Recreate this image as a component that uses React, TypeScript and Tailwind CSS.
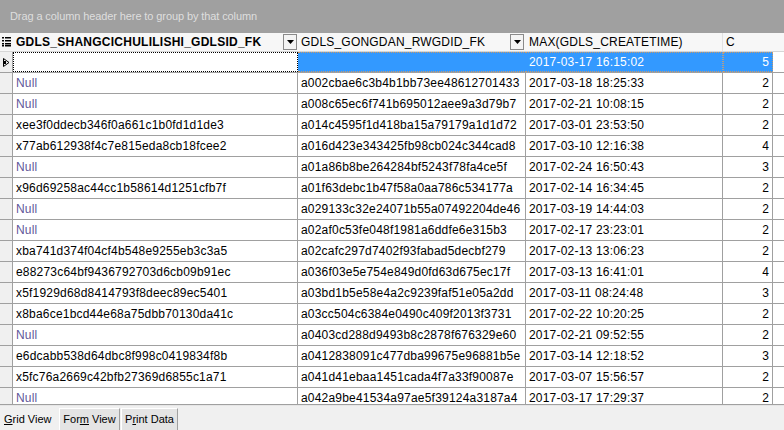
import React from 'react';

type Row = [string | null, string, string, string];

const rows: Row[] = [
  [null, 'a002cbae6c3b4b1bb73ee48612701433', '2017-03-18 18:25:33', '2'],
  [null, 'a008c65ec6f741b695012aee9a3d79b7', '2017-02-21 10:08:15', '2'],
  ['xee3f0ddecb346f0a661c1b0fd1d1de3', 'a014c4595f1d418ba15a79179a1d1d72', '2017-03-01 23:53:50', '2'],
  ['x77ab612938f4c7e815eda8cb18fcee2', 'a016d423e343425fb98cb024c344cad8', '2017-03-10 12:16:38', '4'],
  [null, 'a01a86b8be264284bf5243f78fa4ce5f', '2017-02-24 16:50:43', '3'],
  ['x96d69258ac44cc1b58614d1251cfb7f', 'a01f63debc1b47f58a0aa786c534177a', '2017-02-14 16:34:45', '2'],
  [null, 'a029133c32e24071b55a07492204de46', '2017-03-19 14:44:03', '2'],
  [null, 'a02af0c53fe048f1981a6ddfe6e315b3', '2017-02-17 23:23:01', '2'],
  ['xba741d374f04cf4b548e9255eb3c3a5', 'a02cafc297d7402f93fabad5decbf279', '2017-02-13 13:06:23', '2'],
  ['e88273c64bf9436792703d6cb09b91ec', 'a036f03e5e754e849d0fd63d675ec17f', '2017-03-13 16:41:01', '4'],
  ['x5f1929d68d8414793f8deec89ec5401', 'a03bd1b5e58e4a2c9239faf51e05a2dd', '2017-03-11 08:24:48', '3'],
  ['x8ba6ce1bcd44e68a75dbb70130da41c', 'a03cc504c6384e0490c409f2013f3731', '2017-02-22 10:20:25', '2'],
  [null, 'a0403cd288d9493b8c2878f676329e60', '2017-02-21 09:52:55', '2'],
  ['e6dcabb538d64dbc8f998c0419834f8b', 'a0412838091c477dba99675e96881b5e', '2017-03-14 12:18:52', '3'],
  ['x5fc76a2669c42bfb27369d6855c1a71', 'a041d41ebaa1451cada4f7a33f90087e', '2017-03-07 15:56:57', '2'],
  [null, 'a042a9be41534a97ae5f39124a3187a4', '2017-03-17 17:29:37', '2'],
];

const cols = 'grid grid-cols-[13px_285px_228px_197px_50px]';

function DropButton() {
  return (
    <span className="flex h-[16px] w-[14px] shrink-0 items-center justify-center border border-[#8a8a8a] bg-[#f4f4f4]">
      <svg width="7" height="4" viewBox="0 0 7 4">
        <path d="M0 0h7L3.5 4z" fill="#000" />
      </svg>
    </span>
  );
}

function ColumnsIcon() {
  return (
    <svg width="9" height="10" viewBox="0 0 9 10">
      {[0, 3, 6, 8].map((y) => (
        <g key={y}>
          <rect x="0" y={y} width="2" height="1.5" fill="#000" />
          <rect x="3" y={y} width="6" height="1.5" fill="#000" />
        </g>
      ))}
    </svg>
  );
}

export default function App() {
  return (
    <div className="flex h-[430px] w-[784px] flex-col overflow-hidden bg-white font-['Liberation_Sans',Arial,sans-serif] text-[12px] text-black">
      {/* group-by panel */}
      <div className="flex h-[33px] shrink-0 items-center bg-[#a0a0a0] pl-[10px] text-[11px] tracking-[-0.1px] text-[#dedede]">
        Drag a column header here to group by that column
      </div>

      {/* grid */}
      <div className="flex-1 overflow-hidden border-b border-[#a0a0a0] tracking-[0.2px]">
        {/* header */}
        <div className={`${cols} h-[19px] border-b border-[#d6d6d6] bg-[#f7f7f7]`}>
          <div className="flex items-center justify-center">
            <ColumnsIcon />
          </div>
          <div className="flex items-center justify-between pl-[3px] pr-[1px]">
            <span className="font-bold tracking-[0.25px]">GDLS_SHANGCICHULILISHI_GDLSID_FK</span>
            <DropButton />
          </div>
          <div className="flex items-center justify-between pl-[3px] pr-[2px]">
            <span>GDLS_GONGDAN_RWGDID_FK</span>
            <DropButton />
          </div>
          <div className="flex items-center border-r border-[#e2e2e2] pl-[3px]">MAX(GDLS_CREATETIME)</div>
          <div className="flex items-center pl-[3px]">C</div>
        </div>

        {/* selected row */}
        <div className={`${cols} h-[21px] border-b border-[#a0a0a0]`}>
          <div className="flex items-center justify-center border-r border-[#a0a0a0] bg-[#f0f0f0]">
            <svg width="7" height="9" viewBox="0 0 7 9">
              <path d="M0.5 0.5L6 4.5L0.5 8.5z" fill="none" stroke="#000" strokeWidth="1" />
              <path d="M0 3h3v3h-3z" fill="#000" />
            </svg>
          </div>
          <div className="border border-dotted border-black" />
          <div className="border-y border-dotted border-[#c89a6a] bg-[#3399ff]" />
          <div className="flex items-center border-y border-r border-dotted border-y-[#c89a6a] border-r-[#a0a0a0] bg-[#3399ff] pl-[3px] text-white">
            2017-03-17 16:15:02
          </div>
          <div className="flex items-center justify-end border border-dotted border-[#c89a6a] bg-[#3399ff] pr-[3px] text-white">
            5
          </div>
        </div>

        {rows.map((r, i) => (
          <div key={i} className={`${cols} h-[21px] border-b border-[#a0a0a0]`}>
            <div className="border-r border-[#a0a0a0] bg-[#f0f0f0]" />
            <div className={`flex items-center border-r border-[#a0a0a0] pl-[3px] ${r[0] === null ? 'text-[#62579a]' : ''}`}>
              {r[0] ?? 'Null'}
            </div>
            <div className="flex items-center border-r border-[#a0a0a0] pl-[3px]">{r[1]}</div>
            <div className="flex items-center border-r border-[#a0a0a0] pl-[3px]">{r[2]}</div>
            <div className="flex items-center justify-end border-r border-[#a0a0a0] pr-[3px]">{r[3]}</div>
          </div>
        ))}
      </div>

      {/* view tabs */}
      <div className="flex h-[25px] shrink-0 items-end border-t border-[#e6e6e6] bg-[#f0f0f0] pl-[4px] text-[11px]">
        <div className="flex h-[22px] w-[55px] items-center">
          <span>
            <span className="underline">G</span>rid View
          </span>
        </div>
        <div className="flex h-[22px] w-[61px] items-center justify-center border-l border-t border-r border-l-white border-t-white border-r-[#a0a0a0] bg-[#e4e4e4]">
          <span>
            For<span className="underline">m</span> View
          </span>
        </div>
        <div className="ml-[1px] flex h-[22px] w-[57px] items-center justify-center border-l border-t border-r border-l-white border-t-white border-r-[#a0a0a0] bg-[#e4e4e4]">
          <span>
            P<span className="underline">r</span>int Data
          </span>
        </div>
      </div>
    </div>
  );
}
